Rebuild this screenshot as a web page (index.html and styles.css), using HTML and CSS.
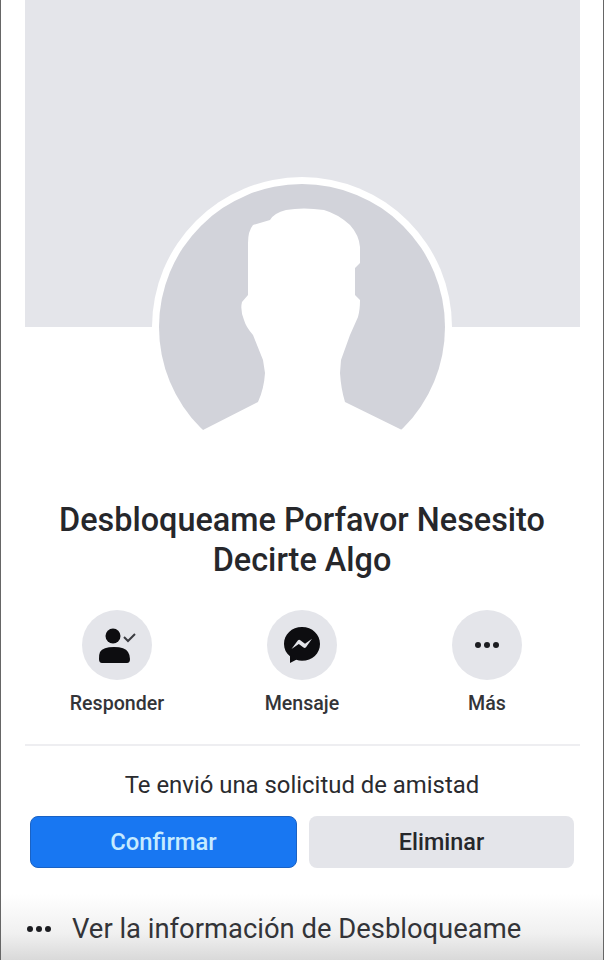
FILE: index.html
```html
<!DOCTYPE html>
<html lang="es">
<head>
    <meta charset="UTF-8">
    <meta name="viewport" content="width=device-width, initial-scale=1.0">
    <title>Solicitud de amistad</title>
    <link rel="stylesheet" href="styles.css">
</head>
<body>
    <div class="page">
        <div class="cover"></div>

        <div class="avatar">
            <svg viewBox="0 0 300 300" width="300" height="300">
                <circle cx="150" cy="150" r="150" fill="#ffffff"/>
                <circle cx="150" cy="150" r="143" fill="#d2d3da"/>
                <!-- silhouette, runs on below the circle so the shoulders cut it off -->
                <path fill="#ffffff" d="M51 253 L106 225 Q112 212 113 196 L111 183 L101 158 Q94 150 92 143 Q88 133 90 125 L96 118 L96 66 Q96 54 101 48 L118 43 Q122 36 134 33 Q151 30 172 33 Q186 37 198 48 Q207 58 208 70 L208 86 L203 91 L203 118 L208 123 Q208 133 206 140 L198 158 L189 183 L188 196 Q189 212 193 225 L250 253 L250 300 L51 300 Z"/>
            </svg>
        </div>

        <h1 class="name">Desbloqueame Porfavor Nesesito Decirte Algo</h1>

        <div class="actions">
            <div class="action">
                <div class="action-icon">
                    <svg viewBox="0 0 38 38" width="38" height="38">
                        <circle cx="15" cy="10" r="7.500" fill="#0d0d10"/>
                        <path fill="#0d0d10" d="M1 33 Q1 28 2 26 Q5 21 16 21 Q27 21 30 26 Q32 29 32 33 Q32 37 29 37 L4 37 Q1 37 1 33 Z"/>
                        <path fill="none" stroke="#3a3b40" stroke-width="2" d="M26 11 L30 15 L37 8"/>
                    </svg>
                </div>
                <span class="action-label">Responder</span>
            </div>
            <div class="action">
                <div class="action-icon">
                    <svg viewBox="0 0 38 38" width="38" height="38">
                        <path fill="#0d0d10" d="M19 1 C8.700 1 1 8.500 1 18 C1 23 3.200 27.300 7 30.300 L7 37 L13.200 33.800 C15 34.400 17 34.800 19 34.800 C29.300 34.800 37 27.400 37 18 C37 8.500 29.300 1 19 1 Z"/>
                        <path fill="#e4e5ea" d="M8.500 23 L14.800 14.500 Q16 13.300 17.300 14.200 L22 17.800 L29 12.800 L23 21.200 Q21.800 22.400 20.500 21.500 L15.800 18 Z"/>
                    </svg>
                </div>
                <span class="action-label">Mensaje</span>
            </div>
            <div class="action">
                <div class="action-icon">
                    <div class="dots"><i></i><i></i><i></i></div>
                </div>
                <span class="action-label">Más</span>
            </div>
        </div>

        <div class="divider"></div>

        <p class="request-text">Te envió una solicitud de amistad</p>

        <div class="buttons">
            <button class="btn btn-confirm">Confirmar</button>
            <button class="btn btn-delete">Eliminar</button>
        </div>

        <div class="info-row">
            <div class="dots"><i></i><i></i><i></i></div>
            <span class="info-text">Ver la información de Desbloqueame</span>
        </div>
    </div>
</body>
</html>
```

FILE: styles.css
```css
body, html {
    margin: 0;
    padding: 0;
    height: 100%;
    overflow: hidden;
    background-color: #ffffff;
    font-family: Roboto, Arial, sans-serif;
}
.page {
    box-sizing: border-box;
    height: 960px;
    display: flex;
    flex-direction: column;
    border-left: 1px solid #666;
    border-right: 1px solid #666;
    color: #26272b;
}
.cover {
    height: 327px;
    margin: 0 23px 0 24px;
    background-color: #e4e5ea;
}
.avatar {
    height: 300px;
    margin-top: -150px;
    display: flex;
    justify-content: center;
}
.name {
    margin: 23px 40px 0;
    font-size: 32.4px;
    line-height: 40px;
    font-weight: 500;
    text-align: center;
}
.actions {
    display: grid;
    grid-template-columns: repeat(3, 185px);
    justify-content: center;
    margin-top: 30px;
}
.action {
    display: flex;
    flex-direction: column;
    align-items: center;
}
.action-icon {
    width: 70px;
    height: 70px;
    border-radius: 50%;
    background-color: #e4e5ea;
    display: flex;
    align-items: center;
    justify-content: center;
}
.action-label {
    margin-top: 13px;
    font-size: 19.6px;
    line-height: 21px;
    font-weight: 500;
    color: #333438;
}
.dots {
    display: flex;
    gap: 3px;
}
.dots i {
    width: 6px;
    height: 6px;
    border-radius: 50%;
    background-color: #1c1d21;
}
.divider {
    height: 2px;
    margin: 30px 23px 0 24px;
    background-color: #eeeef1;
}
.request-text {
    margin: 24px 0 0;
    font-size: 23.9px;
    line-height: 30px;
    text-align: center;
    color: #2a2b2f;
}
.buttons {
    display: flex;
    gap: 12px;
    margin: 16px 29px 0;
}
.btn {
    flex: 1 1 0;
    height: 52px;
    border-radius: 8px;
    font-family: inherit;
    font-weight: 500;
}
.btn-confirm {
    border: 1px solid #1a62c4;
    background-color: #1877f2;
    color: #c6ebff;
    font-size: 23.8px;
}
.btn-delete {
    border: none;
    background-color: #e4e5ea;
    color: #26272b;
    font-size: 23.4px;
}
.info-row {
    flex: 1;
    display: flex;
    align-items: center;
    gap: 21px;
    margin-top: 26px;
    padding: 4px 26px 0;
    background: linear-gradient(#ffffff, #f0f0f0 60%, #d9d9d9);
}
.info-text {
    font-size: 27.4px;
    color: #333438;
}
```
